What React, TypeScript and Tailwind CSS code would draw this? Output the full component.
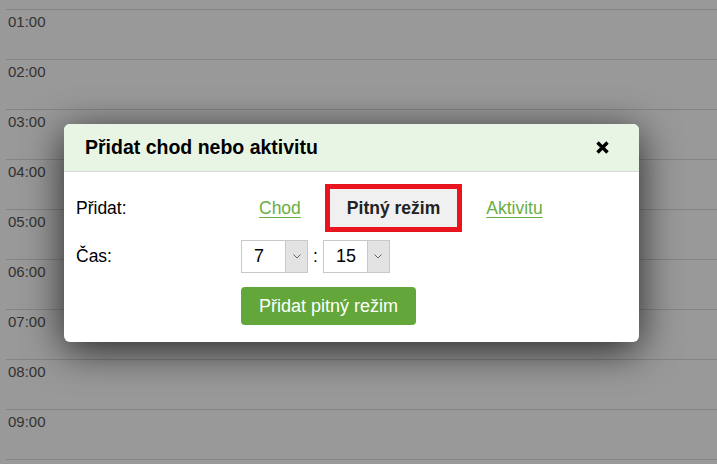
import { useState } from "react";

const hours = ["01:00", "02:00", "03:00", "04:00", "05:00", "06:00", "07:00", "08:00", "09:00"];

function TimeSelect({ value }: { value: string }) {
  return (
    <div className="flex h-[33px] w-[67px] border border-[#c8c8c8] bg-white">
      <div className="flex flex-1 items-center pl-[12px] text-[18px] text-black">{value}</div>
      <div className="flex w-[22px] items-center justify-center border-l border-[#c8c8c8] bg-[#e3e3e3]">
        <svg width="8" height="5" viewBox="0 0 8 5" fill="none">
          <path d="M0.5 0.5 L4 4 L7.5 0.5" stroke="#666" strokeWidth="1" />
        </svg>
      </div>
    </div>
  );
}

export default function App() {
  const [kind, setKind] = useState<"chod" | "pitny" | "aktivita">("pitny");

  const options = [
    { id: "chod" as const, label: "Chod" },
    { id: "pitny" as const, label: "Pitný režim" },
    { id: "aktivita" as const, label: "Aktivitu" },
  ];

  return (
    <div
      className="relative h-[464px] w-full overflow-hidden bg-white"
      style={{ fontFamily: '"Liberation Sans", Arial, sans-serif' }}
    >
      {/* calendar in the background */}
      <div className="pl-[6px]">
        <div className="h-[9px]" />
        {hours.map((h) => (
          <div key={h} className="h-[50px] border-t border-[#dddddd] pl-[2px] pt-[2px] text-[15px] leading-[20px] text-[#555]">
            {h}
          </div>
        ))}
        <div className="border-t border-[#dddddd]" />
      </div>

      <div className="absolute inset-0 bg-black/40" />

      <div className="absolute left-[64px] top-[124px] w-[575px] overflow-hidden rounded-[6px] bg-white shadow-[0_8px_40px_rgba(0,0,0,0.75)]">
        <div className="flex h-[48px] items-center justify-between border-b border-[#d9d9d9] bg-[#e8f5e4] pl-[21px] pr-[30px]">
          <h2 className="text-[19.5px] font-bold text-black">Přidat chod nebo aktivitu</h2>
          <button className="cursor-pointer">
            <svg width="13" height="13" viewBox="0 0 13 13">
              <path d="M1.5 1.5 L11.5 11.5 M11.5 1.5 L1.5 11.5" stroke="#000" strokeWidth="3.4" />
            </svg>
          </button>
        </div>

        <div className="px-[12px] pb-[17px] pt-[12px] text-[17.5px] text-black">
          <div className="flex items-center">
            <div className="w-[165px]">Přidat:</div>
            <div className="flex items-center gap-[6px]">
              {options.map((o) =>
                o.id === kind ? (
                  <button
                    key={o.id}
                    onClick={() => setKind(o.id)}
                    className="h-[48px] border-[5px] border-[#e8141e] bg-[#f0f0f0] px-[17px] font-bold text-[#222]"
                  >
                    {o.label}
                  </button>
                ) : (
                  <button
                    key={o.id}
                    onClick={() => setKind(o.id)}
                    className="h-[48px] border-[5px] border-transparent px-[13px] text-[#6aae43] underline underline-offset-[3px]"
                  >
                    {o.label}
                  </button>
                )
              )}
            </div>
          </div>

          <div className="mt-[8px] flex items-center">
            <div className="w-[165px]">Čas:</div>
            <div className="flex items-center gap-[5px]">
              <TimeSelect value="7" />
              <span>:</span>
              <TimeSelect value="15" />
            </div>
          </div>

          <div className="mt-[14px] pl-[165px]">
            <button className="h-[38px] rounded-[4px] bg-[#63a73b] px-[18px] text-[18px] text-white">
              Přidat pitný režim
            </button>
          </div>
        </div>
      </div>
    </div>
  );
}
